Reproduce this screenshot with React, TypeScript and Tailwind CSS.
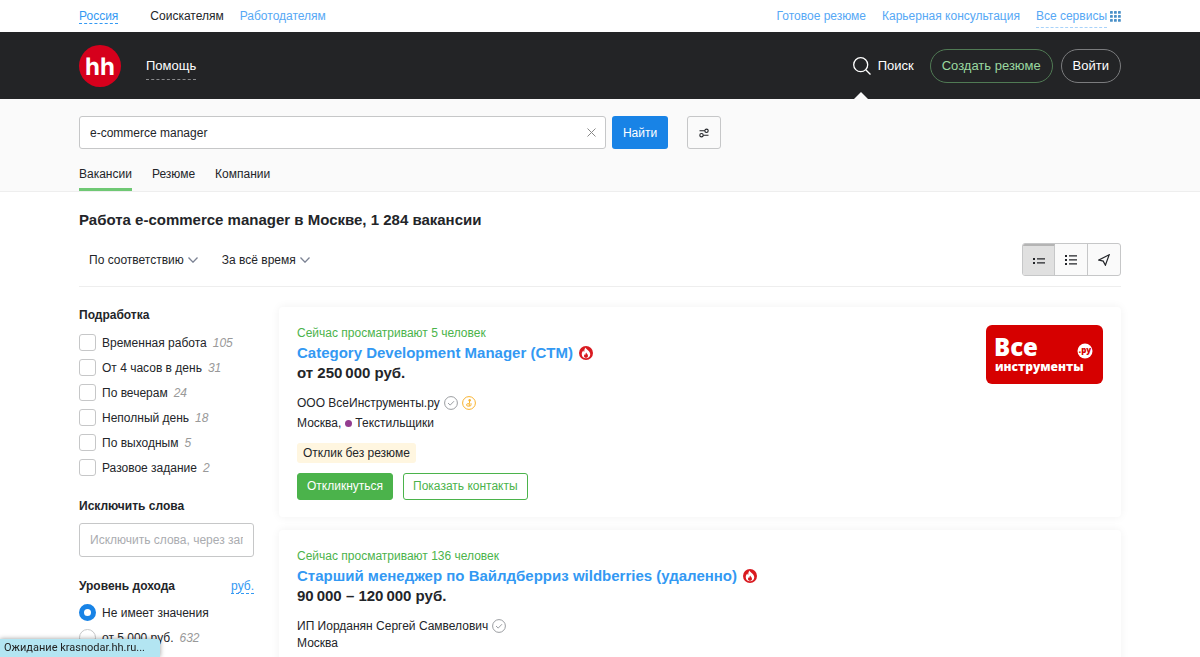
import { useState } from "react"
import type { ReactNode } from "react"

const partTime = [
    { label: "Временная работа", count: "105" },
    { label: "От 4 часов в день", count: "31" },
    { label: "По вечерам", count: "24" },
    { label: "Неполный день", count: "18" },
    { label: "По выходным", count: "5" },
    { label: "Разовое задание", count: "2" },
]

const incomes = [
    { label: "Не имеет значения", count: "" },
    { label: "от 5 000 руб.", count: "632" },
]

const tabs = ["Вакансии", "Резюме", "Компании"]

const FlameIcon = () => (
    <svg viewBox="0 0 28 28" className="size-[14px] shrink-0" aria-hidden="true">
        <circle cx="14" cy="14" r="14" fill="#d91a20" />
        <path d="M13 3c.4 3.500 9.500 6.500 9.500 13.500 0 4.800-3.800 8-8.500 8s-8.500-3.200-8.500-8c0-3.200 1.500-6 3.300-7.500.2 1.500.8 2.600 1.700 3.200-.1-3.600.6-6.900 2.500-9.200z" fill="#fff" />
        <path d="M14.500 13c.3 2.300 3.500 3.500 3.500 6.800 0 2.300-1.700 3.700-4 3.700s-4-1.400-4-3.700c0-1.400.6-2.500 1.400-3.200.2.900.6 1.200 1.100 1.400 0-1.900.7-3.700 2-5z" fill="#d91a20" />
    </svg>
)

const CheckedIcon = () => (
    <svg viewBox="0 0 14 14" className="size-[14px] shrink-0" fill="none" stroke="#8f9296" aria-hidden="true">
        <circle cx="7" cy="7" r="6.400" strokeWidth=".9" />
        <path d="M4 7l2.200 2.100L10 5.200" strokeWidth=".9" />
    </svg>
)

const AwardIcon = () => (
    <svg viewBox="0 0 14 14" className="size-[14px] shrink-0" fill="none" stroke="#f9b32f" aria-hidden="true">
        <circle cx="7" cy="7" r="6.400" strokeWidth="1" />
        <path d="M7.500 5v2.500M9 7.200v1.600a1.300 1.300 0 0 1-1.300 1.300H5.800a1.200 1.200 0 0 1 0-2.400h1.500v2.300" strokeWidth="1" />
        <circle cx="7.700" cy="4.200" r="1.200" fill="#f9b32f" stroke="none" />
    </svg>
)

const ChevronIcon = () => (
    <svg viewBox="0 0 10 6" className="h-[6px] w-[10px]" fill="none" stroke="#7c8394" strokeWidth="1.300" aria-hidden="true">
        <path d="M.5.5L5 5.200 9.500.5" />
    </svg>
)

const CompanyLogo = () => (
    <svg viewBox="0 0 117 59" className="h-[59px] w-[117px] shrink-0" role="img" aria-label="ВсеИнструменты.ру">
        <rect width="117" height="59" rx="6" fill="#d60000" />
        <g fill="#fff" fontFamily="'Open Sans', sans-serif" fontWeight="800">
            <text x="8" y="31" fontSize="24">Все</text>
            <text x="9" y="46" fontSize="12">инструменты</text>
        </g>
        <circle cx="99" cy="26" r="7.500" fill="#fff" />
        <text x="99" y="28" textAnchor="middle" fontSize="8" fontWeight="800" fontFamily="'Open Sans', sans-serif" fill="#d60000">.ру</text>
    </svg>
)

type VacancyProps = {
    watching: string
    title: string
    salary: string
    company: string
    badges: ReactNode
    logo?: ReactNode
    children: ReactNode
}

const Vacancy = ({ watching, title, salary, company, badges, logo, children }: VacancyProps) => (
    <article className="flex justify-between rounded bg-white px-[18px] pt-[18px] pb-[17px] shadow-[0_0_10px_rgba(0,0,0,0.06)]">
        <div>
            <p className="leading-4 text-[#4bb34b]">{watching}</p>
            <h2 className="mt-[2px] flex items-center gap-[6px] text-[15px] leading-5 font-bold">
                <a href="#" className="text-[#3399f3]">{title}</a>
                <FlameIcon />
            </h2>
            <p className="text-[15px] leading-5 font-bold">{salary}</p>
            <div className="mt-3 flex items-center gap-1 leading-4">
                <a href="#">{company}</a>
                {badges}
            </div>
            {children}
        </div>
        {logo}
    </article>
)

export default function App() {
    const [query, setQuery] = useState("e-commerce manager")
    const [tab, setTab] = useState("Вакансии")

    return (
        <div className="min-h-screen bg-white font-['Liberation_Sans',Arial,sans-serif] text-[12px] text-[#232529]">
            <nav className="flex h-8 items-center justify-between px-[79px] text-[#56a8f5]">
                <div className="flex items-center">
                    <a href="#" className="border-b border-dashed border-[#3399f3] leading-[14px] text-[#3399f3]">Россия</a>
                    <a href="#" className="ml-8 text-[#232529]">Соискателям</a>
                    <a href="#" className="ml-4">Работодателям</a>
                </div>
                <div className="flex items-center gap-4">
                    <a href="#">Готовое резюме</a>
                    <a href="#">Карьерная консультация</a>
                    <a href="#" className="flex items-center gap-[3px]">
                        <span className="border-b border-dashed border-[#a9d3fa] leading-[22px]">Все сервисы</span>
                        <svg viewBox="0 0 11 11" className="size-[11px]" fill="#4a90c8" aria-hidden="true">
                            {[0, 4, 8].map((y) => [0, 4, 8].map((x) => (
                                <rect key={`${x}-${y}`} x={x} y={y} width="2.800" height="2.800" rx=".6" />
                            )))}
                        </svg>
                    </a>
                </div>
            </nav>

            <header className="flex h-[67px] items-center justify-between bg-[#232426] px-[79px] text-[13px] text-white">
                <div className="flex items-center gap-[25px]">
                    <a href="#" aria-label="hh" className="block">
                        <svg viewBox="0 0 42 42" className="size-[42px]" aria-hidden="true">
                            <circle cx="21" cy="21" r="21" fill="#d6001c" />
                            <text x="21" y="30" textAnchor="middle" fontSize="24" fontWeight="700" fontFamily="Inter, 'Liberation Sans', sans-serif" fill="#fff" textRendering="geometricPrecision">hh</text>
                        </svg>
                    </a>
                    <button className="mt-[5px] border-b border-dashed border-[#8a8b8d] pb-1 leading-[18px]">Помощь</button>
                </div>
                <div className="flex items-center">
                    <a href="#" className="relative flex items-center gap-[7px]">
                        <svg viewBox="0 0 18 18" className="size-[18px]" fill="none" stroke="#fff" strokeWidth="1.300" aria-hidden="true">
                            <circle cx="7.700" cy="7.700" r="7" />
                            <path d="M12.700 12.700l4.800 4.800" />
                        </svg>
                        Поиск
                        <svg viewBox="0 0 14 7" className="absolute top-[36px] left-px h-[7px] w-[14px]" fill="#fafafa" aria-hidden="true">
                            <path d="M0 7l7-7 7 7z" />
                        </svg>
                    </a>
                    <a href="#" className="ml-4 rounded-full border border-[#507a54] px-[11px] leading-8 text-[#9ad8a0]">Создать резюме</a>
                    <a href="#" className="ml-2 rounded-full border border-[#7b7c7e] px-[11px] leading-8">Войти</a>
                </div>
            </header>

            <section className="border-b border-[#eee] bg-[#fafafa] px-[79px] pt-[17px]">
                <form className="flex h-[33px]" onSubmit={(e) => e.preventDefault()}>
                    <div className="flex basis-[527px] items-center rounded-[3px] border border-[#c6c7c8] bg-white pr-[9px]">
                        <input
                            aria-label="Поиск"
                            value={query}
                            onChange={(e) => setQuery(e.target.value)}
                            className="h-full min-w-0 flex-1 px-[10px] outline-none"
                        />
                        <button type="button" aria-label="Очистить" onClick={() => setQuery("")}>
                            <svg viewBox="0 0 9 9" className="size-[9px]" stroke="#888" strokeWidth="1" aria-hidden="true">
                                <path d="M.5.5l8 8M8.500.5l-8 8" />
                            </svg>
                        </button>
                    </div>
                    <button type="submit" className="ml-[6px] w-[56px] rounded-[3px] bg-[#1883e6] text-white">Найти</button>
                    <button type="button" aria-label="Фильтры" className="ml-[19px] flex w-[34px] items-center justify-center rounded-[3px] border border-[#c6c7c8]">
                        <svg viewBox="0 0 10 10" className="size-[10px]" fill="none" stroke="#232529" strokeWidth="1.100" aria-hidden="true">
                            <path d="M.5 2.800h5.300M4.200 7.200h5.300" />
                            <circle cx="7.500" cy="2.800" r="1.700" />
                            <circle cx="2.500" cy="7.200" r="1.700" />
                        </svg>
                    </button>
                </form>
                <div className="mt-[17px] flex gap-5">
                    {tabs.map((name) => (
                        <button
                            key={name}
                            onClick={() => setTab(name)}
                            className={`h-[25px] border-b-[3px] pb-[6px] leading-4 ${tab === name ? "border-[#6fc874]" : "border-transparent"}`}
                        >
                            {name}
                        </button>
                    ))}
                </div>
            </section>

            <main className="px-[79px]">
                <h1 className="pt-[18px] text-[15px] leading-5 font-bold">Работа e-commerce manager в Москве, 1 284 вакансии</h1>
                <div className="mt-[13px] flex items-center justify-between border-b border-[#eee] pb-[10px]">
                    <div className="flex gap-6 pl-[10px]">
                        <button className="flex items-center gap-1">По соответствию <ChevronIcon /></button>
                        <button className="flex items-center gap-1">За всё время <ChevronIcon /></button>
                    </div>
                    <div className="flex h-[33px] divide-x divide-[#c6c7c8] overflow-hidden rounded-[3px] border border-[#c6c7c8] bg-[#fafafa]">
                        <button aria-label="Кратко" className="flex w-[32px] items-center justify-center border-t-2 border-t-[#b4b4b4] bg-[#e0e0e0]">
                            <svg viewBox="0 0 12 12" className="size-3" fill="#232529" aria-hidden="true">
                                <path d="M0 3h2v2H0zM4 3.300h8v1.200H4zM0 7h2v2H0zM4 7.300h8v1.200H4z" />
                            </svg>
                        </button>
                        <button aria-label="Подробно" className="flex w-[33px] items-center justify-center">
                            <svg viewBox="0 0 12 12" className="size-3" fill="#232529" aria-hidden="true">
                                <path d="M0 1h2v2H0zM4 1.300h8v1.200H4zM0 5h2v2H0zM4 5.300h8v1.200H4zM0 9h2v2H0zM4 9.300h8v1.200H4z" />
                            </svg>
                        </button>
                        <button aria-label="На карте" className="flex w-[32px] items-center justify-center">
                            <svg viewBox="0 0 12 12" className="size-3" fill="none" stroke="#232529" strokeWidth="1.200" aria-hidden="true">
                                <path d="M11.200.8L.9 6l4.300 1.100L7.400 11.200z" />
                            </svg>
                        </button>
                    </div>
                </div>

                <div className="flex gap-[25px] pt-5">
                    <aside className="w-[175px] shrink-0">
                        <fieldset>
                            <legend className="leading-4 font-bold">Подработка</legend>
                            <div className="mt-[11px] flex flex-col gap-2">
                                {partTime.map(({ label, count }) => (
                                    <label key={label} className="flex h-[17px] items-center">
                                        <input type="checkbox" className="size-[17px] appearance-none rounded-[3px] border border-[#c6c7c8] bg-white checked:bg-[#1883e6]" />
                                        <span className="ml-[6px]">{label}</span>
                                        <span className="ml-[6px] text-[#999] italic">{count}</span>
                                    </label>
                                ))}
                            </div>
                        </fieldset>

                        <label htmlFor="exclude" className="mt-[22px] block leading-4 font-bold">Исключить слова</label>
                        <input
                            id="exclude"
                            placeholder="Исключить слова, через запятую"
                            className="mt-[9px] h-[34px] w-full rounded-[3px] border border-[#c6c7c8] px-[10px] placeholder:text-[#aaacb0]"
                        />

                        <div className="mt-[21px] flex items-center justify-between leading-4">
                            <h3 className="font-bold">Уровень дохода</h3>
                            <button className="border-b border-dashed border-[#3399f3] leading-[14px] text-[#3399f3]">руб.</button>
                        </div>
                        <div className="mt-[10px] flex flex-col gap-2">
                            {incomes.map(({ label, count }, i) => (
                                <label key={label} className="flex h-[17px] items-center">
                                    <input
                                        type="radio"
                                        name="income"
                                        defaultChecked={i === 0}
                                        className="size-[17px] appearance-none rounded-full border border-[#c6c7c8] bg-white checked:border-[5px] checked:border-[#1883e6]"
                                    />
                                    <span className="ml-[6px]">{label}</span>
                                    <span className="ml-[6px] text-[#999] italic">{count}</span>
                                </label>
                            ))}
                        </div>
                    </aside>

                    <div className="flex flex-1 flex-col gap-[13px]">
                        <Vacancy
                            watching="Сейчас просматривают 5 человек"
                            title="Category Development Manager (CTM)"
                            salary="от 250&#8201;000 руб."
                            company="ООО ВсеИнструменты.ру"
                            badges={<><CheckedIcon /><AwardIcon /></>}
                            logo={<CompanyLogo />}
                        >
                            <p className="mt-1 flex items-center leading-4">
                                Москва,
                                <span className="mr-[3px] ml-1 size-[7px] rounded-full bg-[#943d90]" />
                                Текстильщики
                            </p>
                            <span className="mt-3 inline-block rounded-[3px] bg-[#fff6e0] px-[6px] leading-5">Отклик без резюме</span>
                            <div className="mt-[10px] flex gap-[10px] leading-[25px]">
                                <button className="rounded-[3px] border border-[#4bb34b] bg-[#4bb34b] px-[9px] text-white">Откликнуться</button>
                                <button className="rounded-[3px] border border-[#4bb34b] px-[9px] text-[#4bb34b]">Показать контакты</button>
                            </div>
                        </Vacancy>
                        <Vacancy
                            watching="Сейчас просматривают 136 человек"
                            title="Старший менеджер по Вайлдберриз wildberries (удаленно)"
                            salary="90&#8201;000 – 120&#8201;000 руб."
                            company="ИП Иорданян Сергей Самвелович"
                            badges={<CheckedIcon />}
                        >
                            <p className="leading-[18px]">Москва</p>
                        </Vacancy>
                    </div>
                </div>
            </main>

            <div className="fixed bottom-0 left-0 w-[160px] rounded-tr-[3px] bg-[#b3e5f2] pl-1 font-['Roboto',sans-serif] text-[11px] leading-[18px] text-[#222] shadow-[0_0_5px_rgba(0,0,0,0.4)]">
                Ожидание krasnodar.hh.ru...
            </div>
        </div>
    )
}
